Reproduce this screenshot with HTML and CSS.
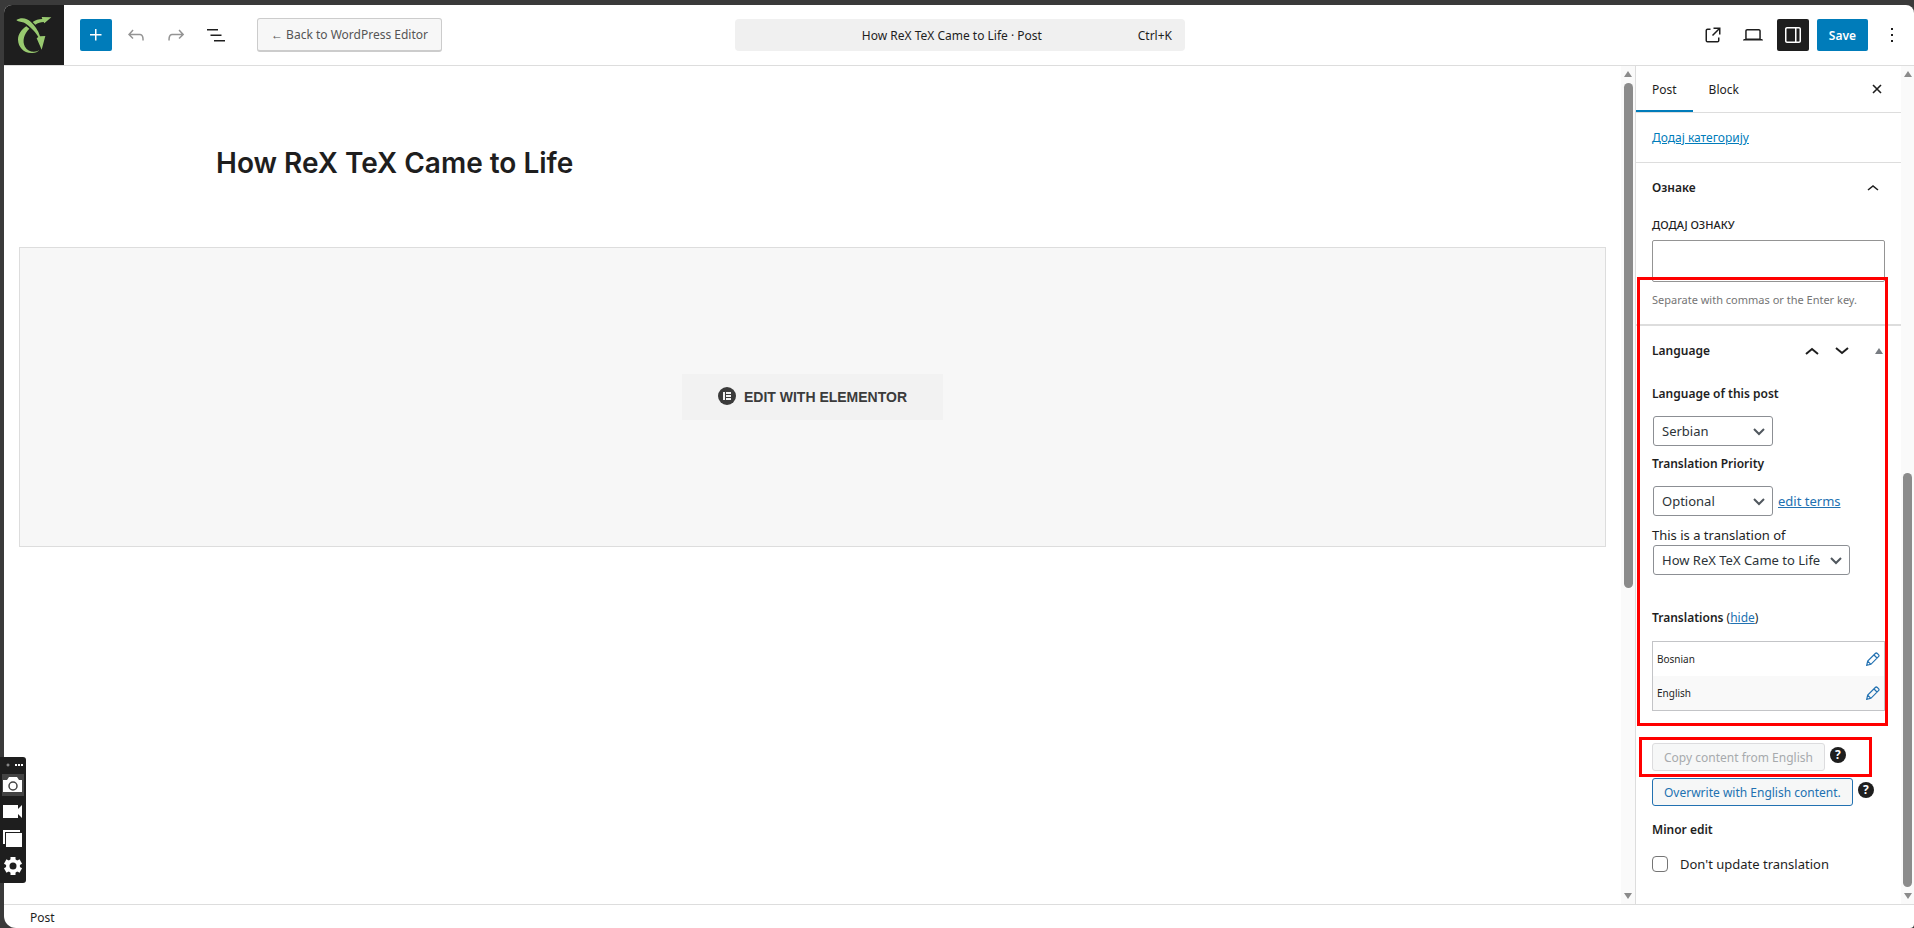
FILE: index.html
```
<!DOCTYPE html>
<html lang="en">
<head>
  <meta charset="UTF-8" />
  <title>How ReX TeX Came to Life</title>
  <link rel="stylesheet" href="styles.css">
</head>
<body>
  <div class="editor">
    <header class="header">
      <div class="header-left">
        <a class="site-logo" href="#" aria-label="View Posts">
          <svg viewBox="0 0 180 180" width="60" height="60" fill="#98c96f">
            <path d="M37 45 C52 36 69 40 80 50 C92 61 103 76 108 94 L124 93 L113 134 L98 100 L103 96 C94 80 77 64 62 54 C54 49 44 52 37 45 Z"/>
            <path d="M86 51 C94 45 104 42 115 42 L113 36 L142 37 L121 55 L119 51 C110 51 102 54 94 59 Z"/>
            <path d="M67 64 L76 71 C60 86 54 108 63 125 C70 138 84 142 99 139 L106 135 C101 142 92 145 82 144 C58 143 43 126 42 104 C42 89 52 73 67 64 Z"/>
          </svg>
        </a>
        <div class="tools">
          <button class="icon-btn primary" aria-label="Block Inserter">
            <svg viewBox="0 0 24 24" width="24" height="24" fill="#fff"><path d="M11 12.5V17.5H12.5V12.5H17.5V11H12.5V6H11V11H6V12.5H11Z"/></svg>
          </button>
          <button class="icon-btn faded" aria-label="Undo">
            <svg viewBox="0 0 24 24" width="24" height="24"><path d="M18.3 11.7c-.6-.6-1.4-.9-2.3-.9H6.7l2.9-3.3-1.1-1-4.5 5L8.5 16l1-1-2.7-2.7H16c.5 0 .9.2 1.3.5 1 1 1 3.4 1 4.5v.3h1.5v-.2c0-1.5 0-4.3-1.5-5.7z"/></svg>
          </button>
          <button class="icon-btn faded" aria-label="Redo">
            <svg viewBox="0 0 24 24" width="24" height="24"><path d="M15.6 6.5l-1.1 1 2.9 3.3H8c-.9 0-1.7.3-2.3.9-1.4 1.5-1.4 4.2-1.4 5.6v.2h1.5v-.3c0-1.1 0-3.5 1-4.5.3-.3.7-.5 1.3-.5h9.2L14.5 15l1.1 1.1 4.6-4.6-4.6-5z"/></svg>
          </button>
          <button class="icon-btn" aria-label="Document Overview">
            <svg viewBox="0 0 24 24" width="24" height="24"><path d="M3 6h11v1.5H3V6Zm3.5 5.5h11V13h-11v-1.5ZM21 17H10v1.5h11V17Z"/></svg>
          </button>
        </div>
        <button class="back-btn">← Back to WordPress Editor</button>
      </div>
      <button class="command-bar">
        <span class="command-title">How ReX TeX Came to Life · Post</span>
        <span>Ctrl+K</span>
      </button>
      <div class="actions">
        <button class="icon-btn" aria-label="View Post">
          <svg viewBox="0 0 24 24" width="24" height="24"><path d="M19.5 4.5h-7V6h4.44l-5.97 5.97 1.06 1.06L18 7.06v4.44h1.5v-7Zm-13 1a2 2 0 0 0-2 2v10a2 2 0 0 0 2 2h10a2 2 0 0 0 2-2v-3H17v3a.5.5 0 0 1-.5.5h-10a.5.5 0 0 1-.5-.5v-10a.5.5 0 0 1 .5-.5h3V5.5h-3Z"/></svg>
        </button>
        <button class="icon-btn" aria-label="View">
          <svg viewBox="0 0 24 24" width="24" height="24"><path d="M20.5 16h-.7V8c0-1.1-.9-2-2-2H6.2c-1.1 0-2 .9-2 2v8h-.7c-.8 0-1.5.7-1.5 1.5h20c0-.8-.7-1.5-1.5-1.5zM5.7 8c0-.3.2-.5.5-.5h11.6c.3 0 .5.2.5.5v7.6H5.7V8z"/></svg>
        </button>
        <button class="icon-btn pressed" aria-label="Settings">
          <svg viewBox="0 0 24 24" width="24" height="24"><path fill-rule="evenodd" d="M18 4H6c-1.1 0-2 .9-2 2v12c0 1.1.9 2 2 2h12c1.1 0 2-.9 2-2V6c0-1.1-.9-2-2-2zm-4 14.5H6c-.3 0-.5-.2-.5-.5V6c0-.3.2-.5.5-.5h8v13zm4.5-.5c0 .3-.2.5-.5.5h-2.5v-13H18c.3 0 .5.2.5.5v12z"/></svg>
        </button>
        <button class="save-btn">Save</button>
        <button class="icon-btn" aria-label="Options">
          <svg viewBox="0 0 24 24" width="24" height="24"><path d="M13 19h-2v-2h2v2zm0-6h-2v-2h2v2zm0-6h-2V5h2v2z"/></svg>
        </button>
      </div>
    </header>

    <div class="body">
      <main class="canvas">
        <h1 class="post-title">How ReX TeX Came to Life</h1>
        <div class="elementor-box">
          <button class="elementor-btn">
            <svg viewBox="0 0 18 18" width="18" height="18"><circle cx="9" cy="8" r="9" fill="#3b3b3b"/><path fill="#f2f2f2" d="M5 4h2v8H5zM8 4h5v2H8zM8 7h5v2H8zM8 10h5v2H8z"/></svg>
            EDIT WITH ELEMENTOR
          </button>
        </div>
      </main>
      <div class="scrollbar" aria-hidden="true">
        <i class="arrow up"></i><i class="thumb canvas-thumb"></i><i class="arrow down"></i>
      </div>

      <aside class="sidebar">
        <nav class="tabs">
          <button class="tab active">Post</button>
          <button class="tab">Block</button>
          <button class="close" aria-label="Close Settings">
            <svg viewBox="0 0 12 12" width="12" height="12"><path d="M2 2l8 8M10 2l-8 8" stroke="#1e1e1e" stroke-width="1.6"/></svg>
          </button>
        </nav>
        <div class="category"><a href="#">Додај категорију</a></div>

        <section class="panel tags">
          <h2 class="panel-head">Ознаке
            <svg viewBox="0 0 12 8" width="12" height="8"><path d="M1 6l5-4 5 4" fill="none" stroke="#1e1e1e" stroke-width="1.6"/></svg>
          </h2>
          <label class="tag-label" for="tag">ДОДАЈ ОЗНАКУ</label>
          <input class="tag-input" id="tag" type="text">
          <p class="hint">Separate with commas or the Enter key.</p>
        </section>

        <section class="panel">
          <h2 class="panel-head meta">Language
            <span class="order">
              <svg viewBox="0 0 14 10" width="14" height="10"><path d="M1 8l6-5 6 5" fill="none" stroke="#1e1e1e" stroke-width="2"/></svg>
              <svg viewBox="0 0 14 10" width="14" height="10"><path d="M1 2l6 5 6-5" fill="none" stroke="#1e1e1e" stroke-width="2"/></svg>
              <svg viewBox="0 0 8 6" width="8" height="6"><path d="M4 0l4 6H0z" fill="#787c82"/></svg>
            </span>
          </h2>
          <label class="field-title" for="lang">Language of this post</label>
          <div class="select-row">
            <span class="select">
              <select id="lang"><option>Serbian</option></select>
              <svg viewBox="0 0 12 8" width="12" height="8"><path d="M1 1l5 5 5-5" fill="none" stroke="#50575e" stroke-width="2"/></svg>
            </span>
          </div>
          <label class="field-title" for="priority">Translation Priority</label>
          <div class="select-row">
            <span class="select">
              <select id="priority"><option>Optional</option></select>
              <svg viewBox="0 0 12 8" width="12" height="8"><path d="M1 1l5 5 5-5" fill="none" stroke="#50575e" stroke-width="2"/></svg>
            </span>
            <a href="#">edit terms</a>
          </div>
          <label class="source-label" for="source">This is a translation of</label>
          <div class="source-row">
            <span class="select wide">
              <select id="source"><option>How ReX TeX Came to Life</option></select>
              <svg viewBox="0 0 12 8" width="12" height="8"><path d="M1 1l5 5 5-5" fill="none" stroke="#50575e" stroke-width="2"/></svg>
            </span>
          </div>
          <p class="translations"><b>Translations</b> (<a href="#">hide</a>)</p>
          <table class="lang-table">
            <tr>
              <td>Bosnian</td>
              <td class="edit"><a href="#" aria-label="Edit Bosnian"><svg viewBox="0 0 14 14" width="14" height="14"><path d="M.7 13.3l1-4.2 7.6-7.6q1-1 2 0l1.2 1.2q1 1 0 2l-7.6 7.6zM8 3l3 3M1.7 9.1l3.2 3.2" fill="none" stroke="#2271b1" stroke-width="1.2"/></svg></a></td>
            </tr>
            <tr>
              <td>English</td>
              <td class="edit"><a href="#" aria-label="Edit English"><svg viewBox="0 0 14 14" width="14" height="14"><path d="M.7 13.3l1-4.2 7.6-7.6q1-1 2 0l1.2 1.2q1 1 0 2l-7.6 7.6zM8 3l3 3M1.7 9.1l3.2 3.2" fill="none" stroke="#2271b1" stroke-width="1.2"/></svg></a></td>
            </tr>
          </table>
          <div class="copy-row">
            <button class="small-btn" disabled>Copy content from English</button>
            <span class="help">?</span>
          </div>
          <div class="copy-row">
            <button class="small-btn">Overwrite with English content.</button>
            <span class="help">?</span>
          </div>
          <p class="minor">Minor edit</p>
          <label class="check"><input type="checkbox"> Don't update translation</label>
        </section>

        <div class="mark mark-language"></div>
        <div class="mark mark-copy"></div>
      </aside>
      <div class="scrollbar narrow" aria-hidden="true">
        <i class="arrow up"></i><i class="thumb sidebar-thumb"></i><i class="arrow down"></i>
      </div>
    </div>

    <footer class="footer">Post</footer>
  </div>

  <!-- screen recorder widget -->
  <div class="recorder">
    <svg viewBox="0 0 26 126" width="26" height="126">
      <circle cx="8" cy="8" r="1" fill="none" stroke="#aaa"/>
      <path d="M15 7h2v2h-2zM18 7h2v2h-2zM21 7h2v2h-2z" fill="#fff"/>
      <path d="M2 17h22v22H2z" fill="#444"/>
      <path d="M3 23h4l2-3h8l2 3h3v12H3z" fill="#fff"/>
      <circle cx="13" cy="29" r="4" fill="#fff" stroke="#444" stroke-width="1.5"/>
      <path d="M3 48h15v4l4-4v13l-4-4v4H3z" fill="#fff"/>
      <path d="M3 73h17v2H5v12H3zM6 76h16v14H6z" fill="#fff"/>
      <g transform="translate(13 109)" fill="#fff">
        <path d="M-2.5-9h5v18h-5z"/><path d="M-2.5-9h5v18h-5z" transform="rotate(60)"/><path d="M-2.5-9h5v18h-5z" transform="rotate(120)"/>
        <circle r="7"/><circle r="3.5" fill="#1e1e1e"/>
      </g>
    </svg>
  </div>
</body>
</html>
```
FILE: styles.css
```
* {
  box-sizing: border-box;
}
body {
  margin: 0;
  padding: 5px 0 0 4px;
  height: 100vh;
  background: #3a3a3a;
  color: #1e1e1e;
  font-family: "Noto Sans", "Open Sans", sans-serif;
  font-size: 12px;
  line-height: 20px;
  overflow: hidden;
}
button, select, input {
  font-family: inherit;
  font-size: inherit;
  color: inherit;
  margin: 0;
}
button {
  border: none;
  background: none;
  padding: 0;
  cursor: pointer;
}
h1, h2, p {
  margin: 0;
}
a {
  color: #2271b1;
}
svg {
  display: block;
  flex: none;
}
.editor {
  display: flex;
  flex-direction: column;
  height: 100%;
  background: #fff;
  border-radius: 8px 8px 4px 12px;
  overflow: hidden;
}

/* top bar */
.header {
  display: flex;
  align-items: center;
  height: 61px;
  border-bottom: 1px solid #ddd;
  flex: none;
}
.header-left {
  flex: 1;
  display: flex;
  align-items: center;
  padding-right: 8px;
}
.site-logo {
  background: #1e1e1e;
  width: 60px;
  height: 60px;
}
.tools {
  display: flex;
  gap: 8px;
  margin: 0 25px 0 16px;
}
.icon-btn {
  width: 32px;
  height: 32px;
  display: flex;
  align-items: center;
  justify-content: center;
  border-radius: 2px;
  fill: #1e1e1e;
}
.icon-btn.primary {
  background: #007cba;
}
.icon-btn.faded {
  fill: #949494;
}
.icon-btn.pressed {
  background: #1e1e1e;
  fill: #fff;
}
.back-btn {
  height: 34px;
  padding: 0 13px;
  border: 1px solid #ccc;
  border-bottom-width: 2px;
  border-radius: 3px;
  background: #f7f7f7;
  color: #555;
}
.command-bar {
  width: 450px;
  height: 32px;
  display: flex;
  align-items: center;
  padding: 0 13px 0 31px;
  background: #f0f0f0;
  border-radius: 4px;
}
.command-title {
  flex: 1;
}
.actions {
  flex: 1;
  display: flex;
  justify-content: flex-end;
  gap: 8px;
  padding-right: 6px;
}
.save-btn {
  background: #007cba;
  color: #fff;
  font-weight: 600;
  padding: 0 12px;
  height: 32px;
  border-radius: 2px;
}

/* canvas */
.body {
  flex: 1;
  display: flex;
  min-height: 0;
}
.canvas {
  flex: 1;
  padding: 0 15px;
}
.post-title {
  font-family: Inter, sans-serif;
  font-size: 28px;
  font-weight: 600;
  line-height: 40px;
  padding: 77px 0 64px 197px;
}
.elementor-box {
  height: 300px;
  display: flex;
  align-items: center;
  justify-content: center;
  border: 1px solid #ddd;
  background: #f7f7f7;
}
.elementor-btn {
  display: flex;
  align-items: center;
  gap: 8px;
  height: 46px;
  padding: 0 36px;
  background: #f2f2f2;
  color: #3b3b3b;
  font-family: "Liberation Sans", Arial, sans-serif;
  font-size: 14px;
  font-weight: 700;
}
.elementor-btn svg {
  overflow: visible;
}
.scrollbar {
  width: 14px;
  flex: none;
  display: flex;
  flex-direction: column;
  align-items: center;
  padding: 5px 0;
  background: #fafafa;
}
.scrollbar.narrow {
  width: 13px;
}
.arrow {
  border: 4px solid transparent;
}
.arrow.up {
  border-top: none;
  border-bottom: 6px solid #8b8b8b;
}
.arrow.down {
  border-bottom: none;
  border-top: 6px solid #8b8b8b;
  margin-top: auto;
}
.thumb {
  width: 9px;
  border-radius: 5px;
  background: #8b8b8b;
}
.canvas-thumb {
  height: 61%;
  margin-top: 6px;
}
.sidebar-thumb {
  height: 50%;
  margin: auto 0 6px;
}
.sidebar-thumb + .arrow {
  margin-top: 0;
}

/* settings sidebar */
.sidebar {
  width: 266px;
  flex: none;
  border-left: 1px solid #ddd;
  position: relative;
}
.tabs {
  display: flex;
  height: 47px;
  border-bottom: 1px solid #ddd;
}
.tab {
  padding: 0 16px;
}
.tab.active {
  box-shadow: inset 0 -2px #007cba;
}
.close {
  margin-left: auto;
  padding: 0 18px;
}
.category {
  padding: 15px 16px 14px;
  border-bottom: 1px solid #ddd;
}
.category a {
  color: #007cba;
}
.panel {
  padding: 0 16px;
}
.tags {
  border-bottom: 2px solid #ddd;
  height: 163px;
}
.panel-head {
  display: flex;
  align-items: center;
  justify-content: space-between;
  height: 50px;
  font-size: 12px;
  font-weight: 600;
  padding-right: 6px;
}
.panel-head.meta {
  padding-right: 2px;
}
.order {
  display: flex;
  align-items: center;
  gap: 16px;
}
.order svg:last-child {
  margin-left: 10px;
}
.tag-label {
  display: block;
  font-size: 11px;
  line-height: 24px;
  font-weight: 500;
}
.tag-input {
  width: 233px;
  height: 42px;
  display: block;
  margin-top: 3px;
  border: 1px solid #949494;
  border-radius: 2px;
}
.hint {
  color: #757575;
  font-size: 11px;
  margin-top: 8px;
}
.field-title {
  display: block;
  margin-top: 8px;
  font-weight: 600;
}
.select-row {
  display: flex;
  align-items: center;
  gap: 5px;
  padding-left: 1px;
  margin-top: 12px;
  font-size: 13px;
}
.source-row {
  padding-left: 1px;
  font-size: 13px;
}
.select {
  position: relative;
  display: inline-block;
  width: 120px;
  height: 30px;
}
.select.wide {
  width: 197px;
  display: block;
}
.select select {
  appearance: none;
  width: 100%;
  height: 30px;
  padding: 0 24px 0 8px;
  border: 1px solid #8c8f94;
  border-radius: 3px;
  background: #fff;
  color: #2c3338;
}
.select svg {
  position: absolute;
  right: 8px;
  top: 12px;
  pointer-events: none;
}
.source-label {
  display: block;
  margin-top: 9px;
  font-size: 13px;
}
.translations {
  margin-top: 33px;
}
.translations b {
  font-weight: 600;
}
.lang-table {
  width: 233px;
  height: 70px;
  margin-top: 13px;
  border: 1px solid #c3c4c7;
  border-spacing: 0;
  font-size: 10px;
}
.lang-table td {
  padding: 0 4px;
}
.lang-table tr:last-child {
  background: #f9f9f9;
}
.lang-table .edit {
  width: 22px;
}
.copy-row {
  display: flex;
  gap: 5px;
  margin-bottom: 7px;
}
.lang-table + .copy-row {
  margin-top: 32px;
}
.small-btn {
  height: 28px;
  padding: 0 11px;
  border: 1px solid #2271b1;
  border-radius: 3px;
  background: #f6f7f7;
  color: #2271b1;
}
.small-btn:disabled {
  border-color: #dcdcde;
  color: #a7aaad;
}
.help {
  width: 16px;
  height: 16px;
  margin-top: 4px;
  border-radius: 50%;
  background: #1e1e1e;
  color: #fff;
  font-weight: 700;
  line-height: 16px;
  text-align: center;
}
.minor {
  margin-top: 14px;
  font-weight: 600;
}
.check {
  display: flex;
  align-items: center;
  gap: 12px;
  margin-top: 14px;
  font-size: 13px;
}
.check input {
  appearance: none;
  width: 16px;
  height: 16px;
  border: 1px solid #757575;
  border-radius: 4px;
}

/* red highlight boxes */
.mark {
  position: absolute;
  border: 3px solid #f00;
  pointer-events: none;
}
.mark-language {
  left: 1px;
  top: 211px;
  width: 251px;
  height: 449px;
}
.mark-copy {
  left: 3px;
  top: 671px;
  width: 233px;
  height: 40px;
}

.footer {
  flex: none;
  height: 24px;
  padding: 3px 26px 0;
  border-top: 1px solid #ddd;
}
.recorder {
  position: absolute;
  left: 0;
  bottom: 45px;
  background: #1e1e1e;
  border-radius: 0 3px 3px 0;
}
```
